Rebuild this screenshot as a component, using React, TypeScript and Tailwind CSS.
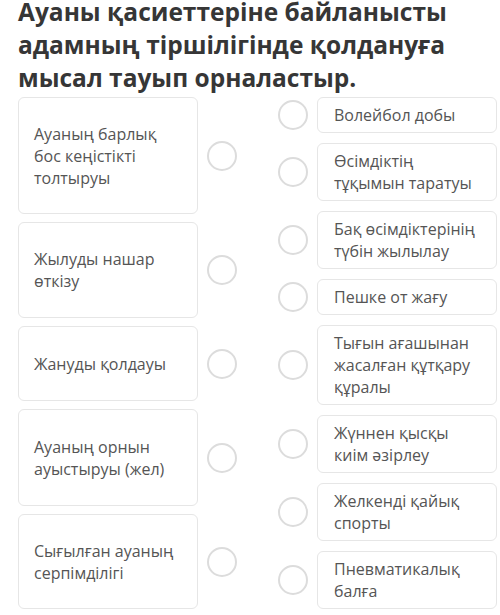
const left = [
  { text: "Ауаның барлық бос кеңістікті толтыруы", h: "h-[117px]" },
  { text: "Жылуды нашар өткізу", h: "h-[96px]" },
  { text: "Жануды қолдауы", h: "h-[75px]" },
  { text: "Ауаның орнын ауыстыруы (жел)", h: "h-[97px]" },
  { text: "Сығылған ауаның серпімділігі", h: "h-[95px]" },
];

const right = [
  "Волейбол добы",
  "Өсімдіктің тұқымын таратуы",
  "Бақ өсімдіктерінің түбін жылылау",
  "Пешке от жағу",
  "Тығын ағашынан жасалған құтқару құралы",
  "Жүннен қысқы киім әзірлеу",
  "Желкенді қайық спорты",
  "Пневматикалық балға",
];

function Circle() {
  return <div className="h-[30px] w-[30px] shrink-0 rounded-full border-2 border-[#dcdcdc] bg-white" />;
}

export default function App() {
  return (
    <div className="h-[615px] w-[500px] overflow-hidden bg-white font-['Open_Sans',sans-serif]">
      <h1 className="-mt-[5px] pl-[18px] text-[24.5px] font-bold leading-[33px] text-[#363636]">
        Ауаны қасиеттеріне байланысты адамның тіршілігінде қолдануға мысал тауып орналастыр.
      </h1>
      <div className="mt-[3px] flex">
        <div className="ml-[18px] flex flex-col gap-[8px]">
          {left.map((item) => (
            <div key={item.text} className="flex items-center">
              <div
                className={`flex w-[180px] items-center rounded-[6px] border border-[#e6e6e6] bg-white pl-[15px] pr-[10px] text-[16px] leading-[22px] text-[#555] ${item.h}`}
              >
                {item.text}
              </div>
              <div className="ml-[9px]">
                <Circle />
              </div>
            </div>
          ))}
        </div>
        <div className="ml-[41px] flex flex-col gap-[10px]">
          {right.map((t) => (
            <div key={t} className="flex items-center">
              <Circle />
              <div className="ml-[9px] w-[180px] rounded-[6px] border border-[#e6e6e6] bg-white py-[6px] pl-[16px] pr-[16px] text-[16px] leading-[22px] text-[#555]">
                {t}
              </div>
            </div>
          ))}
        </div>
      </div>
    </div>
  );
}
